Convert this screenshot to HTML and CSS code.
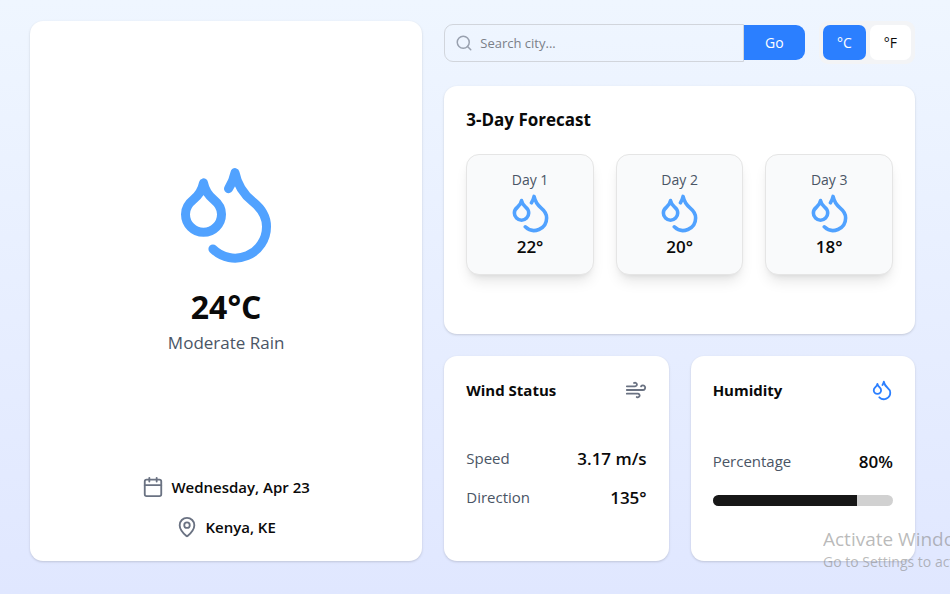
FILE: index.html
```html
<!DOCTYPE html>
<html lang="en">
<head>
<meta charset="utf-8">
<meta name="viewport" content="width=device-width, initial-scale=1">
<title>Weather</title>
<link rel="stylesheet" href="styles.css">
</head>
<body>
<svg class="sprite" aria-hidden="true">
  <symbol id="droplets" viewBox="0 0 24 24">
    <path d="M7 16.3c2.2 0 4-1.83 4-4.05 0-1.16-.57-2.26-1.71-3.19S7.29 6.75 7 5.3c-.29 1.45-1.14 2.84-2.29 3.76S3 11.1 3 12.25c0 2.22 1.8 4.05 4 4.05z"/>
    <path d="M12.56 6.6A10.97 10.97 0 0 0 14 3.02c.5 2.5 2 4.9 4 6.5s3 3.5 3 5.5a6.98 6.98 0 0 1-11.91 4.97"/>
  </symbol>
</svg>
<main class="dashboard">
  <section class="card current">
    <div class="current-main">
      <svg class="icon icon-hero"><use href="#droplets"/></svg>
      <p class="temperature">24°C</p>
      <p class="condition">Moderate Rain</p>
    </div>
    <ul class="details">
      <li class="detail">
        <svg class="icon icon-gray" viewBox="0 0 24 24"><path d="M8 2v4M16 2v4M3 10h18"/><rect x="3" y="4" width="18" height="18" rx="2"/></svg>
        <span>Wednesday, Apr 23</span>
      </li>
      <li class="detail">
        <svg class="icon icon-gray" viewBox="0 0 24 24"><path d="M20 10c0 4.993-5.539 10.193-7.399 11.799a1 1 0 0 1-1.202 0C9.539 20.193 4 14.993 4 10a8 8 0 0 1 16 0"/><circle cx="12" cy="10" r="3"/></svg>
        <span>Kenya, KE</span>
      </li>
    </ul>
  </section>

  <div class="side">
    <header class="toolbar">
      <form class="search">
        <div class="field">
          <svg class="icon search-icon" viewBox="0 0 24 24"><circle cx="11" cy="11" r="8"/><path d="m21 21-4.3-4.3"/></svg>
          <input class="search-input" type="text" placeholder="Search city..." aria-label="Search city">
        </div>
        <button class="go" type="button">Go</button>
      </form>
      <div class="units">
        <button class="unit unit-active" type="button">°C</button>
        <button class="unit" type="button">°F</button>
      </div>
    </header>

    <section class="card forecast">
      <h2 class="forecast-title">3-Day Forecast</h2>
      <div class="days">
        <article class="day">
          <p class="day-name">Day 1</p>
          <svg class="icon icon-day"><use href="#droplets"/></svg>
          <p class="day-temp">22°</p>
        </article>
        <article class="day">
          <p class="day-name">Day 2</p>
          <svg class="icon icon-day"><use href="#droplets"/></svg>
          <p class="day-temp">20°</p>
        </article>
        <article class="day">
          <p class="day-name">Day 3</p>
          <svg class="icon icon-day"><use href="#droplets"/></svg>
          <p class="day-temp">18°</p>
        </article>
      </div>
    </section>

    <div class="stats">
      <section class="card stat">
        <div class="stat-head">
          <h3 class="stat-title">Wind Status</h3>
          <svg class="icon icon-gray" viewBox="0 0 24 24"><path d="M12.8 19.6A2 2 0 1 0 14 16H2"/><path d="M17.5 8a2.5 2.5 0 1 1 2 4H2"/><path d="M9.8 4.4A2 2 0 1 1 11 8H2"/></svg>
        </div>
        <div class="stat-body">
          <div class="row"><span class="label">Speed</span><span class="value">3.17 m/s</span></div>
          <div class="row"><span class="label">Direction</span><span class="value">135°</span></div>
        </div>
      </section>
      <section class="card stat">
        <div class="stat-head">
          <h3 class="stat-title">Humidity</h3>
          <svg class="icon icon-blue"><use href="#droplets"/></svg>
        </div>
        <div class="stat-body">
          <div class="row"><span class="label">Percentage</span><span class="value">80%</span></div>
          <div class="meter" role="progressbar" aria-label="Humidity" aria-valuenow="80"><div class="meter-fill" style="width: 80%"></div></div>
        </div>
      </section>
    </div>
  </div>
</main>
<aside class="watermark">
  <p class="watermark-title">Activate Windows</p>
  <p class="watermark-text">Go to Settings to activate Windows.</p>
</aside>
</body>
</html>
```
FILE: styles.css
```css
* {
  box-sizing: border-box;
}

body,
p,
h2,
h3,
ul {
  margin: 0;
  padding: 0;
}

body {
  position: relative;
  min-height: 100vh;
  background: linear-gradient(to bottom, #eff6ff, #e0e7ff);
  color: #0a0a0a;
  font-family: "Open Sans", "Noto Sans", sans-serif;
  font-size: 14px;
  line-height: 22px;
}

button,
input {
  font: inherit;
}

.sprite {
  position: absolute;
  width: 0;
  height: 0;
}

.icon {
  display: block;
  flex: none;
  width: 22px;
  height: 22px;
  fill: none;
  stroke: currentColor;
  stroke-width: 2;
  stroke-linecap: round;
  stroke-linejoin: round;
}

.icon-gray {
  color: #6a7282;
}

.icon-blue {
  color: #2b7fff;
}

.dashboard {
  display: grid;
  grid-template-columns: 5fr 6fr;
  gap: 22px;
  min-height: 100vh;
  padding: 21px 35px 33px 30px;
}

.card {
  padding: 22px;
  border-radius: 13px;
  background: #fff;
  box-shadow: 0 1px 3px rgba(0, 0, 0, 0.1), 0 1px 2px rgba(0, 0, 0, 0.06);
}

.current {
  display: flex;
  flex-direction: column;
}

.current-main {
  display: flex;
  flex: 1;
  flex-direction: column;
  align-items: center;
  justify-content: center;
}

.icon-hero {
  width: 108px;
  height: 108px;
  margin-bottom: 20px;
  color: #51a2ff;
}

.temperature {
  font-size: 32px;
  font-weight: 700;
  line-height: 40px;
}

.condition {
  color: #4a5565;
  font-size: 17px;
  line-height: 32px;
}

.details {
  display: flex;
  flex-direction: column;
  gap: 16px;
  list-style: none;
}

.detail {
  display: flex;
  align-items: center;
  justify-content: center;
  gap: 7px;
  font-size: 15px;
  font-weight: 600;
  line-height: 24px;
}

.side {
  display: grid;
  grid-template-rows: auto 248fr 205fr;
  gap: 22px;
  min-width: 0;
}

.toolbar,
.search,
.units {
  display: flex;
  align-items: center;
}

.toolbar {
  gap: 14px;
}

.search {
  flex: 1;
  min-width: 0;
}

.field {
  display: flex;
  flex: 1;
  align-items: center;
  gap: 7px;
  min-width: 0;
  height: 38px;
  padding: 0 10px;
  border: 1px solid #d1d5dc;
  border-radius: 9px 0 0 9px;
}

.search-icon {
  width: 18px;
  height: 18px;
  color: #99a1af;
}

.search-input {
  flex: 1;
  min-width: 0;
  padding: 0;
  border: 0;
  outline: 0;
  background: transparent;
  font-size: 13px;
}

.search-input::placeholder {
  color: #7b8088;
}

.go,
.unit {
  height: 35px;
  border: 0;
}

.go {
  width: 61px;
  border-radius: 0 9px 9px 0;
  background: #2b7fff;
  color: #fff;
}

.units {
  gap: 4px;
  padding: 4px;
  border-radius: 9px;
  background: #f3f4f6;
}

.unit {
  padding: 0 14px;
  border-radius: 7px;
  background: #fff;
  color: #0a0a0a;
}

.unit-active {
  background: #2b7fff;
  color: #fff;
}

.forecast-title {
  font-size: 17px;
  font-weight: 700;
  line-height: 24px;
}

.days {
  display: grid;
  grid-template-columns: repeat(3, 1fr);
  gap: 22px;
  margin-top: 22px;
}

.day {
  display: flex;
  flex-direction: column;
  align-items: center;
  padding: 14px;
  border: 1px solid #e5e5e5;
  border-radius: 13px;
  background: #f9fafb;
  box-shadow: 0 9px 14px -3px rgba(0, 0, 0, 0.1), 0 4px 6px -4px rgba(0, 0, 0, 0.1);
}

.day-name {
  color: #4a5565;
}

.icon-day {
  width: 43px;
  height: 43px;
  color: #51a2ff;
}

.day-temp {
  font-size: 17px;
  font-weight: 600;
  line-height: 26px;
}

.stats {
  display: grid;
  grid-template-columns: 1fr 1fr;
  gap: 22px;
}

.stat {
  display: flex;
  flex-direction: column;
}

.stat-head,
.row {
  display: flex;
  align-items: center;
  justify-content: space-between;
}

.stat-head {
  height: 24px;
}

.stat-title {
  font-size: 15px;
  font-weight: 700;
}

.stat-body {
  display: flex;
  flex: 1;
  flex-direction: column;
  justify-content: center;
  gap: 14px;
  padding-top: 14px;
}

.row {
  line-height: 25px;
}

.label {
  color: #4a5565;
  font-size: 15px;
}

.value {
  font-size: 17px;
  font-weight: 600;
}

.meter {
  height: 11px;
  margin-top: 7px;
  overflow: hidden;
  border-radius: 6px;
  background: #d1d1d1;
}

.meter-fill {
  height: 100%;
  background: #171717;
}

.watermark {
  position: absolute;
  right: 0;
  bottom: 21px;
  width: 127px;
  overflow: hidden;
  color: rgba(140, 140, 140, 0.6);
  white-space: nowrap;
  pointer-events: none;
}

.watermark-title {
  font-size: 19px;
  line-height: 24px;
}

.watermark-text {
  font-size: 14px;
}
```
